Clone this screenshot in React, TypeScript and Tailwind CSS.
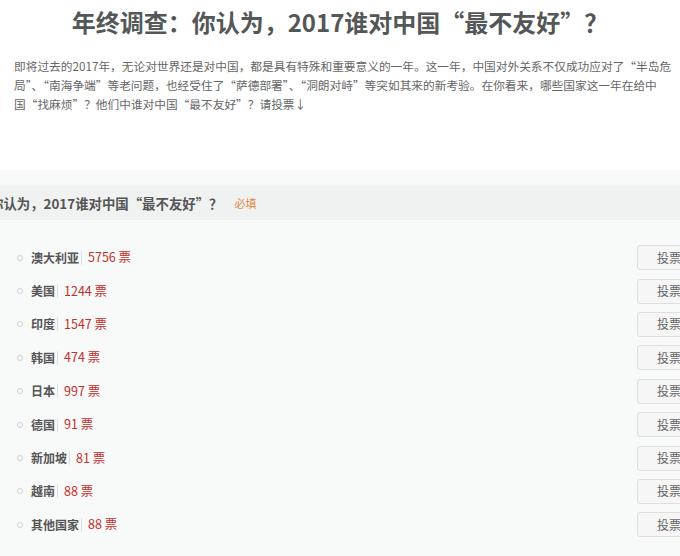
const font = { fontFamily: '"Noto Sans CJK SC", "Noto Sans", sans-serif' };

interface Option {
  name: string;
  votes: number;
}

const options: Option[] = [
  { name: '澳大利亚', votes: 5756 },
  { name: '美国', votes: 1244 },
  { name: '印度', votes: 1547 },
  { name: '韩国', votes: 474 },
  { name: '日本', votes: 997 },
  { name: '德国', votes: 91 },
  { name: '新加坡', votes: 81 },
  { name: '越南', votes: 88 },
  { name: '其他国家', votes: 88 },
];

function OptionRow({ option }: { option: Option }) {
  return (
    <li className="flex h-[33.4px] items-center pl-[17px] pr-[3px]">
      <span className="h-[6px] w-[6px] rounded-full border border-[#cfd2d2]" />
      <span className="ml-[8px] text-[12px] font-bold text-[#555]">{option.name}</span>
      <span className="ml-[2px] h-[14px] w-px bg-[#e2e2e2]" />
      <span className="ml-[6px] text-[12.5px] text-[#c1302c]">{option.votes} 票</span>
      <button className="ml-auto h-[25px] w-[60px] rounded-[3px] border border-[#dedede] bg-[#f6f6f6] pl-[19px] text-left text-[12px] text-[#666]">
        投票
      </button>
    </li>
  );
}

export default function App() {
  return (
    <div className="h-[556px] w-[680px] overflow-hidden bg-white" style={font}>
      {/* 标题与说明 */}
      <div className="pt-[6px]">
        <h1 className="text-center text-[24px] font-bold leading-[32px] text-[#545758]">
          年终调查：你认为，2017谁对中国“最不友好”？
        </h1>
        <p className="ml-[14px] mt-[18px] w-[668px] text-[11.7px] leading-[19px] text-[#666]">
          即将过去的2017年，无论对世界还是对中国，都是具有特殊和重要意义的一年。这一年，中国对外关系不仅成功应对了“半岛危局”、“南海争端”等老问题，也经受住了“萨德部署”、“洞朗对峙”等突如其来的新考验。在你看来，哪些国家这一年在给中国“找麻烦”？他们中谁对中国“最不友好”？请投票↓
        </p>
      </div>

      {/* 投票区 */}
      <div className="mt-[57px] h-[400px] w-[700px] bg-[#f8f9f9] pt-[16px]">
        <div className="flex h-[34px] items-center bg-[#f0f1f1]">
          <span className="ml-[-10px] whitespace-nowrap text-[13.4px] font-bold text-[#555]">
            你认为，2017谁对中国“最不友好”？
          </span>
          <span className="ml-[12px] text-[11px] text-[#de8a3e]">必填</span>
        </div>
        <ul className="pt-[21px]">
          {options.map((o) => (
            <OptionRow key={o.name} option={o} />
          ))}
        </ul>
      </div>
    </div>
  );
}
